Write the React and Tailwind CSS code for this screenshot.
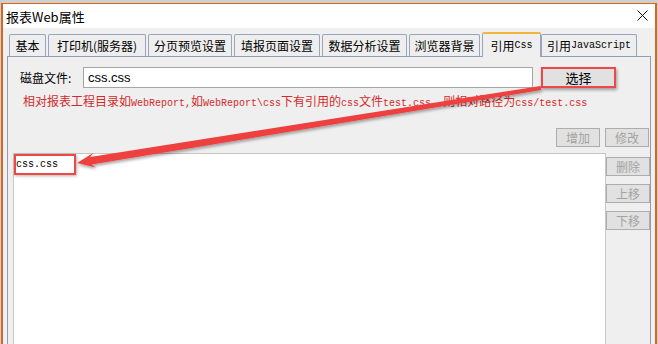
const tabs = [
  { label: '基本', w: 'w-[37px]', ml: 'ml-0' },
  { label: '打印机(服务器)', w: 'w-[98px]', ml: 'ml-[2px]' },
  { label: '分页预览设置', w: 'w-[84px]', ml: 'ml-[2px]' },
  { label: '填报页面设置', w: 'w-[86px]', ml: 'ml-[2px]' },
  { label: '数据分析设置', w: 'w-[85px]', ml: 'ml-[2px]' },
  { label: '浏览器背景', w: 'w-[71px]', ml: 'ml-[2px]' },
];

const Mono = ({ children }) => (
  <span className="font-['Liberation_Mono',monospace] text-[10px]">{children}</span>
);

const SideButton = ({ children, w = 'w-[44px]' }) => (
  <div className={`${w} h-[19px] border border-[#adadad] bg-[#e1e1e1] flex items-center justify-center text-[12px] text-[#a3a3a3] leading-none`}>
    {children}
  </div>
);

export default function App() {
  return (
    <div className="relative w-[658px] h-[344px] overflow-hidden bg-[#cfcfcf] pt-[3px] pl-[1px] font-['Noto_Sans_CJK_SC','Noto_Sans',sans-serif] text-black">
      <div className="w-[656px] h-[341px] border-t border-x-2 border-[#d5671e] flex flex-col">
        {/* title bar */}
        <div className="h-[24px] bg-white flex items-center justify-between pl-[3px] pr-[7px]">
          <span className="text-[13px] leading-none">报表Web属性</span>
          <svg width="11" height="11" viewBox="0 0 11 11" className="mt-[-1px]">
            <path d="M0.5 0.5 L10.5 10.5 M10.5 0.5 L0.5 10.5" stroke="#111" strokeWidth="1" />
          </svg>
        </div>

        {/* body */}
        <div className="flex-1 bg-[#f0f0f0] px-[4px] pt-[4px] flex flex-col">
          <div className="relative z-10 h-[25px] flex items-end pl-[2px]">
            {tabs.map((t) => (
              <div
                key={t.label}
                className={`${t.w} ${t.ml} h-[22px] mb-[1px] border border-b-0 border-[#99a5bd] rounded-t-[2px] bg-[#eeeeee] flex items-center justify-center text-[12px] leading-none`}
              >
                {t.label}
              </div>
            ))}
            <div className="w-[59px] ml-[2px] h-[25px] border-x border-[#99a5bd] border-t-2 border-t-[#f2b63c] rounded-t-[2px] bg-[#efefef] flex items-center justify-center text-[12px] leading-none">
              引用<Mono>Css</Mono>
            </div>
            <div className="w-[96px] h-[22px] mb-[1px] border border-b-0 border-[#99a5bd] rounded-t-[2px] bg-[#eeeeee] flex items-center justify-center text-[12px] leading-none">
              引用<Mono>JavaScript</Mono>
            </div>
          </div>

          <div className="flex-1 mt-[-1px] border border-b-0 border-[#919db5] bg-[#efefef] flex flex-col pt-[10px]">
            {/* file row */}
            <div className="flex items-center h-[21px] pl-[12px]">
              <span className="w-[63px] text-[12px]">磁盘文件:</span>
              <div className="w-[450px] h-[21px] border border-[#a5a5a5] bg-white flex items-center pl-[4px] font-['Liberation_Sans',sans-serif] text-[13px]">
                css.css
              </div>
              <div className="ml-[8px] w-[75px] h-[21px] border-2 border-[#ef4646] shadow-[1px_2px_3px_rgba(0,0,0,0.35)] bg-[#e1e1e1] flex items-center justify-center text-[13px] leading-none">
                选择
              </div>
            </div>

            {/* hint */}
            <div className="mt-[6px] pl-[15px] h-[14px] leading-[14px] text-[12px] text-[#d32b2b] whitespace-nowrap">
              相对报表工程目录如<Mono>WebReport,</Mono>如<Mono>WebReport\css</Mono>下有引用的<Mono>css</Mono>文件<Mono>test.css</Mono>，则相对路径为<Mono>css/test.css</Mono>
            </div>

            {/* top buttons */}
            <div className="mt-[20px] flex justify-end gap-[5px] pr-[1px]">
              <SideButton>增加</SideButton>
              <SideButton>修改</SideButton>
            </div>

            {/* list + side column */}
            <div className="mt-[6px] flex-1 flex">
              <div className="relative ml-[5px] w-[593px] border-t border-x border-[#c8c8c0] bg-white">
                <div className="pl-[2px] pt-[3px] h-[20px] leading-[16px] font-['Liberation_Mono',monospace] text-[10px] text-black">
                  css.css
                </div>
                <div className="absolute left-[0px] top-[0px] w-[62px] h-[21px] border-2 border-[#ef4646] shadow-[1px_1px_3px_rgba(0,0,0,0.3)]" />
              </div>
              <div className="flex-1 flex flex-col gap-[8px] pt-[4px]">
                <SideButton>删除</SideButton>
                <SideButton>上移</SideButton>
                <SideButton>下移</SideButton>
              </div>
            </div>
          </div>
        </div>
      </div>

      {/* annotation arrow */}
      <svg className="absolute left-0 top-0 pointer-events-none" width="658" height="344" viewBox="0 0 658 344">
        <defs>
          <filter id="sh" x="-5%" y="-20%" width="110%" height="140%">
            <feDropShadow dx="1" dy="2" stdDeviation="1.5" floodColor="#000" floodOpacity="0.35" />
          </filter>
        </defs>
        <polygon
          filter="url(#sh)"
          fill="#ef3f3f"
          points="540.7,86 90.2,157 93.6,152.7 77,163 96,167.5 91.5,164.6 541.3,90"
        />
      </svg>
    </div>
  );
}
